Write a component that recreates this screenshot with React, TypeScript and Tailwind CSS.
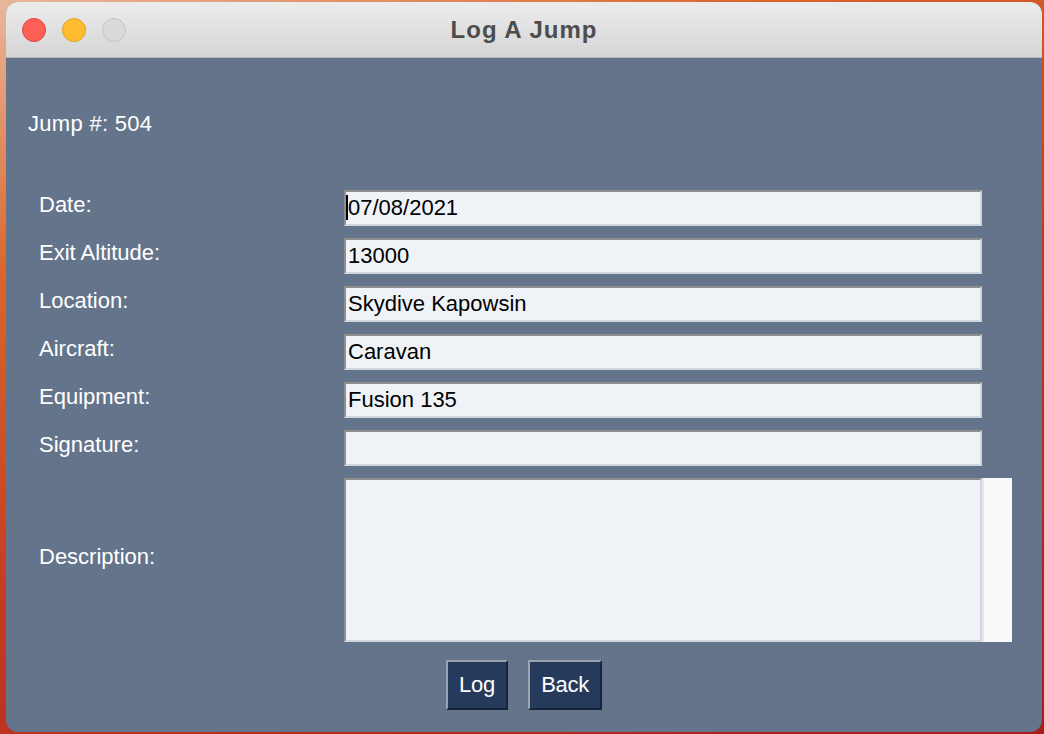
const fields = [
  { label: "Date:", value: "07/08/2021", caret: true },
  { label: "Exit Altitude:", value: "13000" },
  { label: "Location:", value: "Skydive Kapowsin" },
  { label: "Aircraft:", value: "Caravan" },
  { label: "Equipment:", value: "Fusion 135" },
  { label: "Signature:", value: "" },
];

const font = { fontFamily: '"Liberation Sans", Arial, sans-serif' };

const Entry = ({ value, caret }: { value: string; caret?: boolean }) => (
  <div className="relative flex h-[36px] w-[638px] items-center border-t-2 border-l-2 border-b-2 border-r-2 border-t-[#8e8e8e] border-l-[#8e8e8e] border-b-[#d3d7dd] border-r-[#d3d7dd] bg-[#eff3f8] pl-[2px] text-[22px] text-black">
    {caret && <span className="absolute left-[0px] top-[3px] h-[25px] w-[2px] bg-black" />}
    <span className="leading-none">{value}</span>
  </div>
);

const TkButton = ({ text, width }: { text: string; width: string }) => (
  <button
    className={`flex h-[50px] items-center justify-center border-t-2 border-l-2 border-b-2 border-r-2 border-t-[#9aa3b0] border-l-[#9aa3b0] border-b-[#18243a] border-r-[#18243a] bg-[#263a5b] pb-[2px] text-[22px] tracking-[-0.3px] text-white ${width}`}
  >
    {text}
  </button>
);

export default function App() {
  return (
    <div className="h-[734px] w-[1044px] overflow-hidden bg-[linear-gradient(160deg,#e9b79c_0%,#d9652a_25%,#c43a22_55%,#a81c1c_100%)] pl-[6px] pt-[2px]" style={font}>
      <div className="flex h-[730px] w-[1036px] flex-col overflow-hidden rounded-[12px] bg-[#64758b]">
        <div className="relative flex h-[56px] shrink-0 items-center justify-center border-b border-[#b4b4b4] bg-[linear-gradient(#ececec,#d5d5d5)]">
          <div className="absolute left-[16px] top-[16px] flex gap-[16px]">
            <span className="h-[24px] w-[24px] rounded-full border border-[#e0443e] bg-[#fe5f57]" />
            <span className="h-[24px] w-[24px] rounded-full border border-[#dea123] bg-[#febc2e]" />
            <span className="h-[24px] w-[24px] rounded-full border border-[#c4c4c4] bg-[#d9d9d9]" />
          </div>
          <span className="text-[24px] font-bold tracking-[1px] text-[#4d4d4d]">Log A Jump</span>
        </div>

        <div className="flex flex-col pl-[22px] pt-[53px]">
          <div className="text-[22px] leading-[26px] tracking-[0.3px] text-white">Jump #: 504</div>

          <div className="mt-[53px] flex flex-col gap-[12px] pl-[11px]">
            {fields.map((f) => (
              <div key={f.label} className="flex">
                <div className="mt-[2px] w-[305px] text-[22px] leading-[26px] text-white">{f.label}</div>
                <Entry value={f.value} caret={f.caret} />
              </div>
            ))}
            <div className="flex items-center">
              <div className="mb-[6px] w-[305px] text-[22px] leading-[26px] text-white">Description:</div>
              <div className="flex h-[164px]">
                <div className="h-full w-[638px] border-t-2 border-l-2 border-b-2 border-r-2 border-t-[#8e8e8e] border-l-[#8e8e8e] border-b-[#d3d7dd] border-r-[#d3d7dd] bg-[#eff3f8]" />
                <div className="h-full w-[30px] border-l-2 border-[#e6e6e6] bg-[#f9f9f9]" />
              </div>
            </div>
          </div>
        </div>

        <div className="mt-[18px] flex justify-center gap-[20px]">
          <TkButton text="Log" width="w-[62px]" />
          <TkButton text="Back" width="w-[74px]" />
        </div>
      </div>
    </div>
  );
}
